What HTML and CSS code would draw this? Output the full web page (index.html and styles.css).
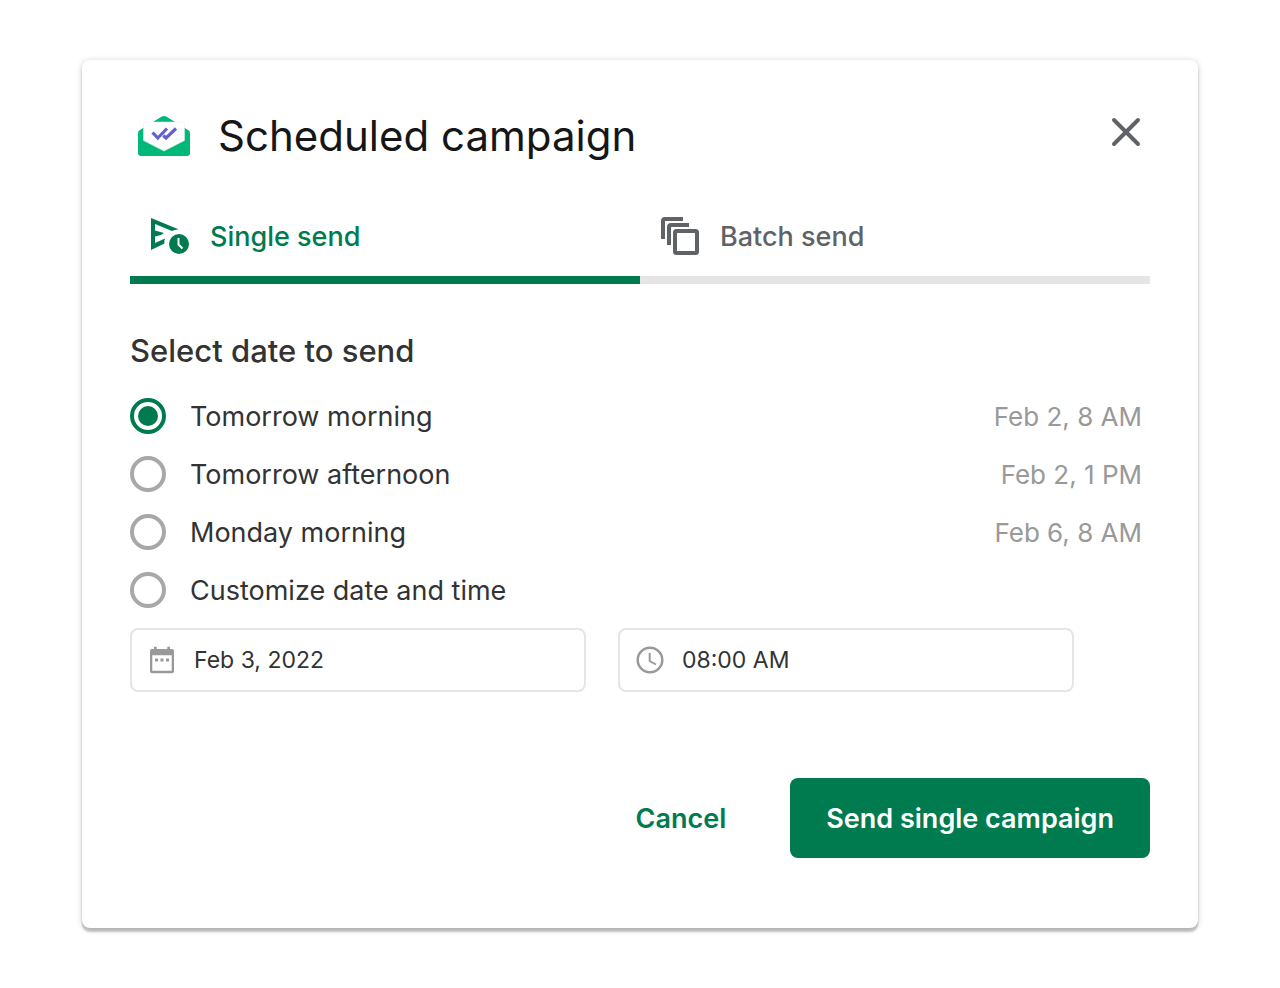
FILE: index.html
```html
<!DOCTYPE html>
<html lang="en">
<head>
  <meta charset="UTF-8">
  <meta name="viewport" content="width=device-width, initial-scale=1.0">
  <title>Scheduled campaign</title>
  <link rel="stylesheet" href="styles.css">
</head>
<body>

<form class="dialog" role="dialog" aria-labelledby="dialog-title">
  <header class="dialog-header">
    <svg class="logo" viewBox="0 0 52 40" aria-hidden="true">
      <path fill="#00b877" d="M0 17q0-2 2-3L23 1q3-2 6 0l21 13q2 1 2 3v20q0 3-3 3H3q-3 0-3-3z"/>
      <path fill="#fff" stroke="#eee" stroke-width=".5" d="M5.500 6h41v18.500L26 35 5.500 24.500z"/>
      <path fill="none" stroke="#655fcb" stroke-width="3.200" d="M14.500 16.500l5.300 5.500 9.200-9.500M25.300 19.500l2.700 2.500 10-9.500"/>
    </svg>
    <h1 id="dialog-title">Scheduled campaign</h1>
    <button type="button" class="close" aria-label="Close">
      <svg viewBox="0 0 32 32"><path d="M4 4l24 24M28 4L4 28"/></svg>
    </button>
  </header>

  <div class="tabs" role="tablist">
    <button type="button" class="tab active" role="tab" aria-selected="true">
      <svg viewBox="0 0 40 40" aria-hidden="true">
        <path fill="currentColor" d="M1 2l28 11.500q-4-.500-7 1.500L5 8v6.500L14 17l-3 2-6 1.500V27l10-4.500q-1 2-.500 5L1 34z"/>
        <circle fill="currentColor" cx="29" cy="28" r="10"/>
        <path fill="none" stroke="#fff" stroke-width="2" d="M28.500 22v6.500l4 4"/>
      </svg>
      Single send
    </button>
    <button type="button" class="tab" role="tab" aria-selected="false">
      <svg viewBox="0 0 40 40" aria-hidden="true">
        <g fill="none" stroke="currentColor" stroke-width="4">
          <path d="M3 23V5q0-2 2-2h18"/>
          <path d="M9 29V11q0-2 2-2h18"/>
          <rect x="15" y="15" width="22" height="22" rx="1.500"/>
        </g>
      </svg>
      Batch send
    </button>
  </div>

  <h2 id="date-title">Select date to send</h2>
  <div class="options" role="radiogroup" aria-labelledby="date-title">
    <label class="option">
      <input type="radio" name="date" value="morning" checked>
      <span class="option-name">Tomorrow morning</span>
      <span class="option-date">Feb 2, 8 AM</span>
    </label>
    <label class="option">
      <input type="radio" name="date" value="afternoon">
      <span class="option-name">Tomorrow afternoon</span>
      <span class="option-date">Feb 2, 1 PM</span>
    </label>
    <label class="option">
      <input type="radio" name="date" value="monday">
      <span class="option-name">Monday morning</span>
      <span class="option-date">Feb 6, 8 AM</span>
    </label>
    <label class="option">
      <input type="radio" name="date" value="custom">
      <span class="option-name">Customize date and time</span>
    </label>
  </div>

  <div class="fields">
    <label class="field">
      <svg viewBox="0 0 28 28" aria-hidden="true">
        <path fill="currentColor" fill-rule="evenodd" d="M6 .700h2.700V3h10.600V.700H22V3h2q2 0 2 2v20.300q0 2-2 2H4q-2 0-2-2V5q0-2 2-2h2zM4.300 9.300v15.400h19.400V9.300z"/>
        <path fill="currentColor" d="M7 12.500h3v3H7zM12.500 12.500h3v3h-3zM18 12.500h3v3h-3z"/>
      </svg>
      <input type="text" value="Feb 3, 2022" aria-label="Date">
    </label>
    <label class="field">
      <svg viewBox="0 0 28 28" aria-hidden="true">
        <circle cx="14" cy="14" r="12.300" fill="none" stroke="currentColor" stroke-width="2.500"/>
        <path fill="none" stroke="currentColor" stroke-width="2" d="M13.700 7v8l6.300 3.500"/>
      </svg>
      <input type="text" value="08:00 AM" aria-label="Time">
    </label>
  </div>

  <footer class="actions">
    <button type="button" class="btn">Cancel</button>
    <button type="submit" class="btn btn-primary">Send single campaign</button>
  </footer>
</form>

</body>
</html>
```
FILE: styles.css
```css
* {
  box-sizing: border-box;
}
body {
  margin: 0;
  padding: 60px 82px;
  background: #fff;
  color: #333;
  font-family: 'Inter', 'Roboto', sans-serif;
}
button,
input {
  font-family: inherit;
}
button {
  border: none;
  background: none;
  padding: 0;
  cursor: pointer;
}
.dialog {
  padding: 48px 48px 70px;
  border-radius: 8px;
  background: #fff;
  box-shadow: 0 4px 2px rgba(0, 0, 0, 0.2), 0 1px 6px rgba(0, 0, 0, 0.2);
}
.dialog-header {
  display: flex;
  align-items: center;
  height: 56px;
  padding: 0 8px;
  margin-bottom: 32px;
}
.logo {
  width: 52px;
  height: 40px;
  margin-right: 28px;
}
h1 {
  flex: 1;
  margin: 0;
  color: #161616;
  font-size: 42px;
  font-weight: 400;
  line-height: 54px;
}
.close {
  display: flex;
  height: 36px;
  align-self: flex-start;
  align-items: center;
  margin-top: 6px;
}
.close svg {
  width: 32px;
  height: 32px;
  fill: none;
  stroke: #5f6368;
  stroke-width: 4;
  stroke-linecap: round;
}

/* tabs */
.tabs {
  display: flex;
  margin-bottom: 48px;
}
.tab {
  display: flex;
  flex: 1;
  align-items: center;
  gap: 20px;
  height: 88px;
  padding: 0 20px;
  border-bottom: 8px solid #e5e5e5;
  color: #5f6368;
  font-size: 27px;
  font-weight: 500;
}
.tab svg {
  width: 40px;
  height: 40px;
}
.tab.active {
  color: #007b50;
  border-color: #007b50;
}

h2 {
  margin: 0 0 28px;
  font-size: 31px;
  font-weight: 500;
  line-height: 38px;
}
.options {
  display: flex;
  flex-direction: column;
  gap: 22px;
}
.option {
  display: flex;
  align-items: center;
  height: 36px;
  padding-right: 8px;
  font-size: 27px;
}
.option input {
  appearance: none;
  width: 36px;
  height: 36px;
  margin: 0 24px 0 0;
  border: 4px solid #a8a8a8;
  border-radius: 50%;
}
.option input:checked {
  border-color: #007b50;
  padding: 4px;
  background: #007b50 content-box;
}
.option-name {
  flex: 1;
}
.option-date {
  color: #999;
  font-size: 26px;
}

/* custom date and time */
.fields {
  display: flex;
  gap: 32px;
  margin-top: 20px;
  padding-right: 76px;
}
.field {
  display: flex;
  flex: 1;
  align-items: center;
  gap: 18px;
  height: 64px;
  padding: 0 16px;
  border: 2px solid #e5e5e5;
  border-radius: 8px;
  color: #999;
}
.field svg {
  flex: none;
  width: 28px;
  height: 28px;
}
.field input {
  flex: 1;
  min-width: 0;
  padding: 0;
  border: none;
  outline: none;
  color: #333;
  font-size: 23px;
}

.actions {
  display: flex;
  justify-content: flex-end;
  gap: 28px;
  margin-top: 86px;
}
.btn {
  height: 80px;
  padding: 0 36px;
  border-radius: 8px;
  color: #007b50;
  font-size: 27px;
  font-weight: 600;
}
.btn-primary {
  background: #007b50;
  color: #fff;
}
```
